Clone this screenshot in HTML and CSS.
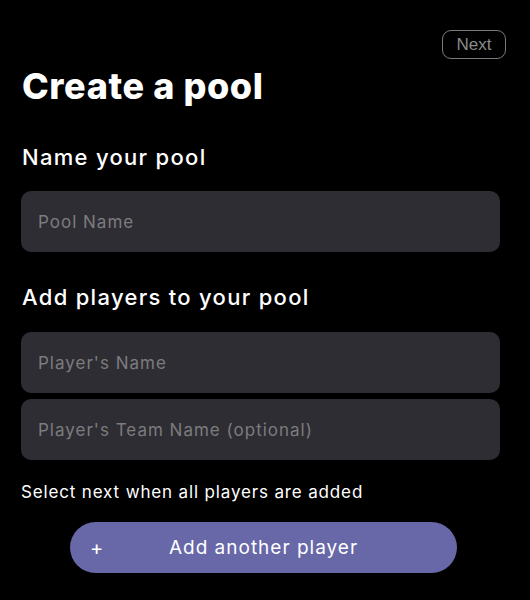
FILE: index.html
```html
<!DOCTYPE html>
<html lang="en">
<head>
<meta charset="utf-8">
<title>Create a pool</title>
<link rel="stylesheet" href="styles.css">
</head>
<body>
<div class="page">
  <div class="topbar">
    <button class="next-btn" type="button">Next</button>
  </div>
  <h1 class="title">Create a pool</h1>
  <h2 class="section">Name your pool</h2>
  <div class="field field-pool"><span class="placeholder">Pool Name</span></div>
  <h2 class="section section-players">Add players to your pool</h2>
  <div class="fields">
    <div class="field"><span class="placeholder">Player's Name</span></div>
    <div class="field"><span class="placeholder">Player's Team Name (optional)</span></div>
  </div>
  <p class="hint">Select next when all players are added</p>
  <button class="add-btn" type="button"><span class="plus">+</span><span class="add-label">Add another player</span></button>
</div>
</body>
</html>
```

FILE: styles.css
```css
* { box-sizing: border-box; }
html, body {
  margin: 0;
  background: #000;
  height: 100%;
}
body {
  font-family: Inter, "Open Sans", sans-serif;
  color: #fff;
}
.page {
  display: flex;
  flex-direction: column;
  padding: 30px 30px 0 21px;
}
.topbar {
  display: flex;
  justify-content: flex-end;
  margin-right: -6px;
}
.next-btn {
  width: 64px;
  height: 29px;
  border: 1.5px solid #7a7a7a;
  border-radius: 9px;
  background: transparent;
  color: #8a8a8a;
  font-family: "Liberation Sans", Arial, sans-serif;
  font-size: 17px;
  padding: 0;
}
.title {
  margin: 5px 0 0 1px;
  font-size: 36px;
  font-weight: 800;
  line-height: 44px;
  letter-spacing: 0.6px;
}
.section {
  margin: 34px 0 0 1px;
  font-size: 22px;
  font-weight: 500;
  line-height: 30px;
  letter-spacing: 1.3px;
}
.section-players { margin-top: 30px; }
.field {
  height: 61px;
  background: #2e2d33;
  border-radius: 10px;
  display: flex;
  align-items: center;
  padding-left: 17px;
}
.field-pool { margin-top: 19px; }
.fields { display: flex; flex-direction: column; gap: 6px; margin-top: 20px; }
.placeholder {
  color: #7c7c7e;
  font-size: 17px;
  letter-spacing: 1px;
}
.hint {
  margin: 21px 0 0 0;
  font-size: 17px;
  line-height: 22px;
  letter-spacing: 0.85px;
}
.add-btn {
  margin: 19px 0 0 49px;
  width: 387px;
  height: 51px;
  border: none;
  border-radius: 26px;
  background: #6868a8;
  color: #fff;
  font-family: inherit;
  font-size: 19px;
  letter-spacing: 1px;
  display: flex;
  align-items: center;
  padding: 0 0 0 20px;
}
.plus {
  width: 14px;
  font-size: 20px;
  text-align: center;
}
.add-label {
  flex: 1;
  text-align: center;
  padding-right: 34px;
}
```
